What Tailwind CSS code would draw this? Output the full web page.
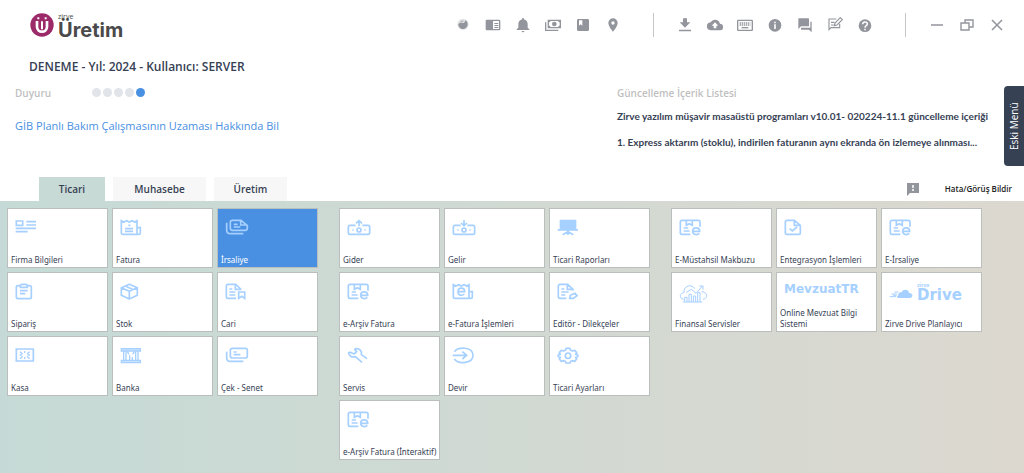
<!DOCTYPE html>
<html lang="tr">
<head>
<meta charset="utf-8">
<title>Zirve Üretim</title>
<script src="https://cdn.jsdelivr.net/npm/@tailwindcss/browser@4"></script>
</head>
<body class="relative flex min-h-screen flex-col bg-white font-['Open_Sans','Noto_Sans',sans-serif] text-[#364154]">

<svg class="hidden" aria-hidden="true">
  <symbol id="archive" viewBox="0 0 72 54">
    <g fill="none" stroke="currentColor" stroke-width="5"><path d="M34 46H9a5 5 0 0 1-5-5V9a5 5 0 0 1 5-5h49a5 5 0 0 1 5 5v14"/><path d="M22 5v14l9-5 9 5V5M14 27h13M14 36h18"/><path d="M41 37h21c0-14-21-14-21 0 0 11 14 12 20 6"/></g>
  </symbol>
  <symbol id="money" viewBox="0 0 72 54">
    <g fill="none" stroke="currentColor" stroke-width="5"><path d="M26 19H9a5 5 0 0 0-5 5v17a5 5 0 0 0 5 5h54a5 5 0 0 0 5-5V24a5 5 0 0 0-5-5H46"/><circle cx="36" cy="33" r="6"/><path d="M16 33h4M52 33h4"/></g>
  </symbol>
</svg>

<header class="flex h-[50px] items-center pr-3 pl-[30px] text-[#92959c]">
  <div class="flex items-center gap-1 text-[#4a4a4a]">
    <svg class="size-6" viewBox="0 0 72 72"><circle cx="36" cy="36" r="35" fill="#9c2a68"/><path d="M21 24v17c0 20 30 20 30 0V24" fill="none" stroke="#fff" stroke-width="8"/><path d="M36 25v24M22 16h6M44 16h6" fill="none" stroke="#fff" stroke-width="6"/></svg>
    <div class="flex flex-col pt-0.5">
      <span class="text-[7px] leading-[7px]">zirve</span>
      <span class="font-[Inter] text-[20px] leading-5 font-bold">Üretim</span>
    </div>
  </div>
  <div class="ml-auto flex items-center">
    <button class="flex w-[30px] justify-center" aria-label="Durum"><svg class="size-4" viewBox="0 0 48 48"><circle cx="24" cy="22" r="17" fill="#e3e4e6"/><path d="M10 21c0 21 28 19 28 1 0-6-4-11-8-12 1 6-3 9-7 8-5-2-9 0-13 3z" fill="currentColor"/><path d="M14 17c3-7 9-7 12-6-1 5-7 3-12 6z" fill="#aeb1b6"/></svg></button>
    <button class="flex w-[30px] justify-center" aria-label="Haberler"><svg class="size-4" viewBox="0 0 24 24"><path fill="currentColor" fill-rule="evenodd" d="M3 4h18a2 2 0 0 1 2 2v12a2 2 0 0 1-2 2H3a2 2 0 0 1-2-2V6a2 2 0 0 1 2-2zm9 2v12h9V6zm2 3h6v1.500h-6zm0 3h6v1.500h-6zm0 3h6v1.500h-6z"/></svg></button>
    <button class="flex w-[30px] justify-center" aria-label="Bildirimler"><svg class="size-4" viewBox="0 0 24 24"><path fill="currentColor" d="M12 23a2 2 0 0 0 2-2h-4a2 2 0 0 0 2 2zm7-7v-5.500c0-3.500-2-6-5.500-6.800V3a1.500 1.500 0 0 0-3 0v.7C7 4.500 5 7 5 10.500V16l-2.500 2.500v1h19v-1z"/></svg></button>
    <button class="flex w-[30px] justify-center" aria-label="Kasa hareketleri"><svg class="size-4" viewBox="0 0 24 24"><path fill="currentColor" fill-rule="evenodd" d="M4 4h20v13H4zm4 2c0 1.500-.8 2-2 2v5c1.200 0 2 .8 2 2h12c0-1.200.8-2 2-2V8c-1.200 0-2-.5-2-2zm6 1a3.500 3.500 0 1 1 0 7 3.500 3.500 0 0 1 0-7z"/><path fill="none" stroke="currentColor" stroke-width="2" d="M1 8v12h19"/></svg></button>
    <button class="flex w-[30px] justify-center" aria-label="Defter"><svg class="size-4" viewBox="0 0 24 24"><path fill="currentColor" fill-rule="evenodd" d="M5 3h14a2 2 0 0 1 2 2v14a2 2 0 0 1-2 2H5a2 2 0 0 1-2-2V5a2 2 0 0 1 2-2zm1 2v8l2.500-2 2.500 2V5z"/></svg></button>
    <button class="flex w-[30px] justify-center" aria-label="Konum"><svg class="size-4" viewBox="0 0 24 24"><path fill="currentColor" fill-rule="evenodd" d="M12 2a7 7 0 0 0-7 7c0 5.200 7 13 7 13s7-7.800 7-13a7 7 0 0 0-7-7zm0 4.500a2.500 2.500 0 1 1 0 5 2.500 2.500 0 0 1 0-5z"/></svg></button>
    <span class="mr-4 ml-[25px] h-6 w-px bg-[#c3c5c8]"></span>
    <button class="flex w-[30px] justify-center" aria-label="İndir"><svg class="size-4" viewBox="0 0 24 24"><path fill="currentColor" d="M9 2h6v6h5l-8 8-8-8h5zM3 19h18v2.500H3z"/></svg></button>
    <button class="flex w-[30px] justify-center" aria-label="Buluta yükle"><svg class="size-4" viewBox="0 0 24 24"><path fill="currentColor" fill-rule="evenodd" d="M19.400 10A7.500 7.500 0 0 0 5.400 8 6 6 0 0 0 6 20h13a5 5 0 0 0 .4-10zM14 13v4h-4v-4H7l5-5 5 5z"/></svg></button>
    <button class="flex w-[30px] justify-center" aria-label="Klavye"><svg class="size-4" viewBox="0 0 24 24"><rect x="1" y="5" width="22" height="15" rx="1" fill="#fff" stroke="currentColor" stroke-width="2"/><path stroke="currentColor" stroke-width="2" stroke-dasharray="2 1" d="M4 9h16M4 12h16"/><path stroke="currentColor" stroke-width="2" d="M7 16h10"/></svg></button>
    <button class="flex w-[30px] justify-center" aria-label="Bilgi"><svg class="size-4" viewBox="0 0 24 24"><path fill="currentColor" fill-rule="evenodd" d="M12 3a9.500 9.500 0 1 0 0 19 9.500 9.500 0 0 0 0-19zm-1.200 4h2.400v2.400h-2.400zm0 4h2.400v7h-2.400z"/></svg></button>
    <button class="flex w-[30px] justify-center" aria-label="Mesajlar"><svg class="size-4" viewBox="0 0 24 24"><path fill="currentColor" d="M22 7h-2v9H6v2a1 1 0 0 0 1 1h11l4 4V8a1 1 0 0 0 0-1zm-4 6V3a1 1 0 0 0-1-1H3a1 1 0 0 0-1 1v15l4-4h11a1 1 0 0 0 1-1z"/></svg></button>
    <button class="flex w-[30px] justify-center" aria-label="Not yaz"><svg class="size-4" viewBox="0 0 24 24"><path fill="none" stroke="currentColor" stroke-width="1.700" d="M14 3H3v16l3-3h13v-6M6 8h5M6 12h4M11 13l1-4 8-8 3 3-8 8z"/></svg></button>
    <button class="flex w-[30px] justify-center" aria-label="Yardım"><svg class="size-4" viewBox="0 0 24 24"><circle cx="12" cy="13" r="9.500" fill="currentColor"/><path fill="none" stroke="#fff" stroke-width="2.200" d="M8.500 11c0-5 7-4.500 7-.5 0 2.500-3.500 2.500-3.500 5.500M12 17.500V20"/></svg></button>
    <span class="mr-4 ml-[25px] h-6 w-px bg-[#c3c5c8]"></span>
    <button class="flex w-[30px] justify-center" aria-label="Küçült"><svg class="size-4" viewBox="0 0 16 16"><path stroke="currentColor" stroke-width="1.500" d="M2 8h12"/></svg></button>
    <button class="flex w-[30px] justify-center" aria-label="Önceki boyut"><svg class="size-4" viewBox="0 0 16 16"><path fill="none" stroke="currentColor" stroke-width="1.400" d="M2 6h8v7H2zM6 6V3h8v7h-4"/></svg></button>
    <button class="flex w-[30px] justify-center" aria-label="Kapat"><svg class="size-4" viewBox="0 0 16 16"><path stroke="currentColor" stroke-width="1.500" d="M3 3l10 10M13 3L3 13"/></svg></button>
  </div>
</header>

<h1 class="pt-0.5 pl-[29px] text-[12px] leading-[30px] font-semibold">DENEME - Yıl: 2024 - Kullanıcı: SERVER</h1>

<div class="flex h-[95px] justify-between pr-[28px] pl-[15px]">
  <section>
    <div class="flex h-[22px] items-center">
      <h2 class="w-[77px] text-[10px] font-semibold text-[#bfbfbf]">Duyuru</h2>
      <div class="flex gap-0.5 pb-0.5">
        <span class="size-[9px] rounded-full bg-[#e1e5e9]"></span><span class="size-[9px] rounded-full bg-[#e1e5e9]"></span><span class="size-[9px] rounded-full bg-[#e1e5e9]"></span><span class="size-[9px] rounded-full bg-[#e1e5e9]"></span><span class="size-[9px] rounded-full bg-[#4a90e2]"></span>
      </div>
    </div>
    <a href="#" class="mt-3 block text-[11px] leading-5 text-[#4a90e2]">GİB Planlı Bakım Çalışmasının Uzaması Hakkında Bil</a>
  </section>
  <section class="w-[379px] whitespace-nowrap">
    <h2 class="text-[10px] leading-[22px] font-semibold text-[#bfbfbf]">Güncelleme İçerik Listesi</h2>
    <p class="font-[Lato] text-[10px] leading-6 font-bold">Zirve yazılım müşavir masaüstü programları v10.01- 020224-11.1 güncelleme içeriği</p>
    <p class="font-[Lato] text-[10px] leading-7 font-bold">1. Express aktarım (stoklu), indirilen faturanın aynı ekranda ön izlemeye alınması...</p>
  </section>
</div>

<button class="absolute top-[86px] right-0 h-20 w-5 rotate-180 rounded-r-sm bg-[#364154] text-center text-[10px] leading-5 font-medium text-white [writing-mode:vertical-rl]">Eski Menü</button>

<nav class="flex items-stretch gap-2 pr-3 pl-[39px] text-[10px] leading-6 font-semibold">
  <button class="w-[66px] bg-[#c8dad6]">Ticari</button>
  <button class="w-[93px] bg-[#f7f7f7]">Muhasebe</button>
  <button class="w-[73px] bg-[#f7f7f7]">Üretim</button>
  <a href="#" class="ml-auto flex items-center gap-[25px] text-[8px] text-[#222]">
    <svg class="size-3.5 text-[#92959c]" viewBox="0 0 14 14"><path fill="currentColor" d="M1 1h12v10H4l-3 3z"/><path stroke="#fff" stroke-width="1.500" d="M7 3v3M7 7v2"/></svg>
    Hata/Görüş Bildir
  </a>
</nav>

<main class="flex flex-1 items-start gap-[21px] bg-linear-to-r from-[#c5dad6] to-[#dcd8cf] px-[7px] pt-[7px] pb-3 font-['Noto_Sans'] text-[8px] leading-[11px]">
  <section class="grid grid-cols-[repeat(3,101px)] gap-1 *:flex *:h-15 *:flex-col *:items-start *:justify-between *:border *:border-[#babfbd] *:px-[3px] *:pt-2.5 *:pb-0.5 *:text-left">
    <button class="bg-white"><svg class="ml-1 h-[18px] w-6 text-[#a6d0ff]" viewBox="0 0 72 54"><g fill="none" stroke="currentColor" stroke-width="5"><path d="M4 6h19v13H4zM34 8h29M34 18h29M2 28h61M2 38h36"/></g></svg>Firma Bilgileri</button>
    <button class="bg-white"><svg class="ml-1 h-[18px] w-6 text-[#a6d0ff]" viewBox="0 0 72 54"><g fill="none" stroke="currentColor" stroke-width="5"><path d="M59 46H9c-3 0-5-2-5-5V5l8 4 8-4 8 4 8-4 8 4 7-4v36c0 3 2 5 5 5s5-2 5-5V26H51M25 19h6M15 29h24M15 37h24"/></g></svg>Fatura</button>
    <button class="bg-[#4a90e2] text-white"><svg class="ml-1 h-[18px] w-6 text-[#a6d0ff]" viewBox="0 0 72 54"><g fill="none" stroke="currentColor" stroke-width="5"><path d="M22 4h26l19 16v8a6 6 0 0 1-6 6H22a6 6 0 0 1-6-6V10a6 6 0 0 1 6-6zM47 5v13h19M26 16h12M26 24h20"/><path d="M5 11v21c0 8 4 12 12 12h38"/></g></svg>İrsaliye</button>
    <button class="bg-white"><svg class="ml-1 h-[18px] w-6 text-[#a6d0ff]" viewBox="0 0 72 54"><g fill="none" stroke="currentColor" stroke-width="5"><path d="M16 8H9a5 5 0 0 0-5 5v29a5 5 0 0 0 5 5h35a5 5 0 0 0 5-5V13a5 5 0 0 0-5-5h-7M21 4h11a5 5 0 0 1 5 5v4H16V9a5 5 0 0 1 5-5zM15 23h23M15 32h16"/></g></svg>Sipariş</button>
    <button class="bg-white"><svg class="ml-1 h-[18px] w-6 text-[#a6d0ff]" viewBox="0 0 72 54"><g fill="none" stroke="currentColor" stroke-width="5" stroke-linejoin="round"><path d="M28 4l24 10v23L28 48 4 37V14zM4 14l24 11 24-11M28 25v22M16 9l24 11"/></g></svg>Stok</button>
    <button class="bg-white"><svg class="ml-1 h-[18px] w-6 text-[#a6d0ff]" viewBox="0 0 72 54"><g fill="none" stroke="currentColor" stroke-width="5"><path d="M33 46H9a5 5 0 0 1-5-5V9a5 5 0 0 1 5-5h23l15 14v3M31 5v14h16M13 18h9M13 27h18M13 36h18M41 27h18v19l-9-6-9 6z"/></g></svg>Cari</button>
    <button class="bg-white"><svg class="ml-1 h-[18px] w-6 text-[#a6d0ff]" viewBox="0 0 72 54"><g fill="none" stroke="currentColor" stroke-width="5"><path d="M4 6h51v36H4z"/><path d="M15 14l8 7M44 14l-8 7M15 35l8-7M44 35l-8-7M29 12v6M29 30v6M14 24h7M38 24h7" stroke-width="4"/></g></svg>Kasa</button>
    <button class="bg-white"><svg class="ml-1 h-[18px] w-6 text-[#a6d0ff]" viewBox="0 0 72 54"><g fill="none" stroke="currentColor" stroke-width="4"><path fill="currentColor" fill-opacity=".6" d="M4 5h57v7H4zM4 40h57v7H4z"/><path d="M11 12v28M18 12v28M29 25v15M37 30v10M47 12v28M54 12v28M22 14l5 8M43 14l-5 8"/></g></svg>Banka</button>
    <button class="bg-white"><svg class="ml-1 h-[18px] w-6 text-[#a6d0ff]" viewBox="0 0 72 54"><g fill="none" stroke="currentColor" stroke-width="5"><rect x="16" y="4" width="51" height="29" rx="6"/><path d="M26 15h9M26 23h20M5 14v18c0 8 4 11 11 11h39"/></g></svg>Çek - Senet</button>
  </section>

  <section class="grid grid-cols-[repeat(3,101px)] gap-1 whitespace-nowrap *:flex *:h-15 *:flex-col *:items-start *:justify-between *:border *:border-[#babfbd] *:bg-white *:px-[3px] *:pt-2.5 *:pb-0.5 *:text-left">
    <button><svg class="ml-1 h-[18px] w-6 text-[#a6d0ff]" viewBox="0 0 72 54"><use href="#money"/><path fill="none" stroke="currentColor" stroke-width="5" d="M36 22V5M27 13l9-8 9 8"/></svg>Gider</button>
    <button><svg class="ml-1 h-[18px] w-6 text-[#a6d0ff]" viewBox="0 0 72 54"><use href="#money"/><path fill="none" stroke="currentColor" stroke-width="5" d="M36 3v17M27 12l9 8 9-8"/></svg>Gelir</button>
    <button><svg class="ml-1 h-[18px] w-6 text-[#a6d0ff]" viewBox="0 0 72 54"><path fill="currentColor" d="M8 2h50v28h5v5H2v-5h6z"/><path fill="none" stroke="currentColor" stroke-width="5" d="M33 33v15M33 38l-16 9M33 38l16 9"/></svg>Ticari Raporları</button>
    <button><svg class="ml-1 h-[18px] w-6 text-[#a6d0ff]" viewBox="0 0 72 54"><use href="#archive"/></svg>e-Arşiv Fatura</button>
    <button><svg class="ml-1 h-[18px] w-6 text-[#a6d0ff]" viewBox="0 0 72 54"><g fill="none" stroke="currentColor" stroke-width="5"><path d="M59 46H9c-3 0-5-2-5-5V5l8 4 8-4 8 4 8-4 8 4 7-4v36c0 3 2 5 5 5s5-2 5-5V26H51"/><path d="M18 26h20c0-14-20-14-20 0 0 12 13 13 19 7"/></g></svg>e-Fatura İşlemleri</button>
    <button><svg class="ml-1 h-[18px] w-6 text-[#a6d0ff]" viewBox="0 0 72 54"><g fill="none" stroke="currentColor" stroke-width="5"><path d="M28 46H9a5 5 0 0 1-5-5V9a5 5 0 0 1 5-5h23l16 15v4M31 5v14h16M13 18h9M13 27h22M13 36h12M38 46l2-9 14-6 6 7-11 8z"/></g></svg>Editör - Dilekçeler</button>
    <button><svg class="ml-1 h-[18px] w-6 text-[#a6d0ff]" viewBox="0 0 72 54"><path fill="none" stroke="currentColor" stroke-width="5" stroke-linejoin="round" d="M60 35L43 23c3-9-4-19-17-18l-3 2 6 7-8 7-11-5-5 1c0 9 10 15 20 12l20 17"/></svg>Servis</button>
    <button><svg class="ml-1 h-[18px] w-6 text-[#a6d0ff]" viewBox="0 0 72 54"><path fill="none" stroke="currentColor" stroke-width="5" d="M7 14C20-3 63 0 63 25S20 53 7 36M2 25h41M31 14l13 11-13 11"/></svg>Devir</button>
    <button><svg class="ml-1 h-[18px] w-6 text-[#a6d0ff]" viewBox="0 0 72 54"><g fill="none" stroke="currentColor" stroke-width="5" stroke-linejoin="round"><path d="M27 4h12l2 6 5 2 7-2 6 7-3 5 6 1v6l-6 2 3 5-6 7-7-2-5 2-2 5H27l-2-5-5-2-7 2-6-7 3-5-6-2v-6l6-1-3-5 6-7 7 2 5-2z"/><circle cx="33" cy="26" r="8"/></g></svg>Ticari Ayarları</button>
    <button><svg class="ml-1 h-[18px] w-6 text-[#a6d0ff]" viewBox="0 0 72 54"><use href="#archive"/></svg>e-Arşiv Fatura (İnteraktif)</button>
  </section>

  <section class="grid grid-cols-[repeat(3,101px)] gap-1 *:flex *:h-15 *:flex-col *:items-start *:justify-between *:border *:border-[#babfbd] *:bg-white *:px-[3px] *:pt-2.5 *:pb-0.5 *:text-left">
    <button><svg class="ml-1 h-[18px] w-6 text-[#a6d0ff]" viewBox="0 0 72 54"><use href="#archive"/></svg>E-Müstahsil Makbuzu</button>
    <button><svg class="ml-1 h-[18px] w-6 text-[#a6d0ff]" viewBox="0 0 72 54"><path fill="none" stroke="currentColor" stroke-width="5" d="M9 4h22l18 15v22a5 5 0 0 1-5 5H9a5 5 0 0 1-5-5V9a5 5 0 0 1 5-5zM31 5v14h17M17 29l8 7 14-12"/></svg>Entegrasyon İşlemleri</button>
    <button><svg class="ml-1 h-[18px] w-6 text-[#a6d0ff]" viewBox="0 0 72 54"><use href="#archive"/></svg>E-İrsaliye</button>
    <button><svg class="ml-1 h-5 w-[30px] text-[#a6d0ff]" viewBox="0 0 90 60"><g fill="none" stroke="currentColor" stroke-width="3"><path d="M14 49C-1 46 2 29 15 29 13 7 39 2 47 17M68 26c20 2 18 22 4 23M22 28l15-9 14 12 20-22M61 9h11v11M17 57V43h7v14M30 57V34h7v23M43 57V39h7v18M56 57V29h7v28M12 57h58"/></g></svg>Finansal Servisler</button>
    <button><span class="-mt-0.5 ml-1 font-['DejaVu_Sans'] text-[12px] leading-4 font-bold text-[#a6d0ff]">MevzuatTR</span>Online Mevzuat Bilgi Sistemi</button>
    <button>
      <span class="ml-1 flex items-center gap-1 text-[#a6d0ff]">
        <svg class="h-3 w-6" viewBox="0 0 72 36"><path fill="currentColor" d="M23 29c4-2 5-4 5-7 0-6 7-7 10-6 5-12 22-8 22 2 12 0 14 12 4 15H31c-4 0-7-2-8-4z"/><path fill="none" stroke="currentColor" stroke-width="3" d="M16 15h12M7 21h17M2 29h19M12 25h11"/></svg>
        <span class="flex flex-col font-bold"><span class="font-[Inter] text-[5px] leading-[5px]">zirve</span><span class="font-['DejaVu_Sans'] text-[15px] leading-[15px]">Drive</span></span>
      </span>
      Zirve Drive Planlayıcı
    </button>
  </section>
</main>
</body>
</html>
